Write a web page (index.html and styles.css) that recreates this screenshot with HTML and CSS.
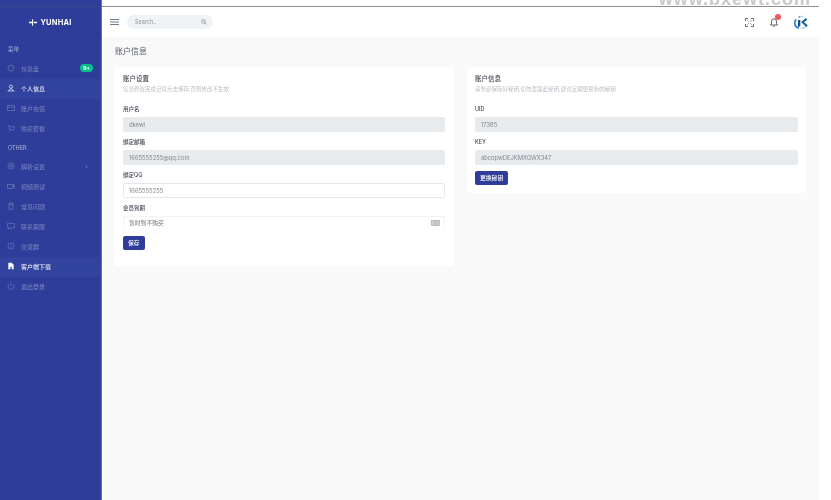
FILE: index.html
```html
<!DOCTYPE html>
<html lang="zh-CN">
<head>
<meta charset="utf-8">
<title>账户信息</title>
<link rel="stylesheet" href="styles.css">
</head>
<body>
<div class="app">
  <aside class="sidebar">
    <div class="top-rule"></div>
    <div class="brand">
      <svg class="brand-icon" viewBox="0 0 12 10"><path d="M0 4h4.6V0h1.6v10H4.6V6H0zM7.2 4H12v2H7.2z" fill="#fff"/></svg>
      <span>YUNHAI</span>
    </div>
    <div class="nav-label">菜单</div>
    <nav>
      <a class="nav-item"><svg viewBox="0 0 12 12"><circle cx="6" cy="6" r="4.6"/><path d="M6 6V3.5"/></svg><span>仪表盘</span><b class="badge">9+</b></a>
      <a class="nav-item active"><svg viewBox="0 0 12 12"><circle cx="6" cy="4" r="2.4"/><path d="M1 10.5h10M3 10.5c0-2 1-3 3-3s3 1 3 3"/></svg><span>个人信息</span></a>
      <a class="nav-item"><svg viewBox="0 0 12 12"><rect x="1" y="2.5" width="10" height="7.5"/><path d="M1 5h10"/></svg><span>账户充值</span></a>
      <a class="nav-item"><svg viewBox="0 0 12 12"><path d="M1 2h2l1 7h6l1-5H4"/></svg><span>购买套餐</span></a>
    </nav>
    <div class="nav-label">OTHER</div>
    <nav>
      <a class="nav-item"><svg viewBox="0 0 12 12"><circle cx="6" cy="6" r="4.6"/><circle cx="6" cy="6" r="1.8"/></svg><span>解析设置</span><i class="chev">›</i></a>
      <a class="nav-item"><svg viewBox="0 0 12 12"><rect x="1" y="3.5" width="8" height="6"/><path d="M9 6l2-1.5v4L9 7"/></svg><span>视频测试</span></a>
      <a class="nav-item"><svg viewBox="0 0 12 12"><path d="M3 1.500h6v9.500H3zM3 4h6"/></svg><span>常见问题</span></a>
      <a class="nav-item"><svg viewBox="0 0 12 12"><path d="M1 2h10v7H5l-2 2V9H1z"/></svg><span>联系客服</span></a>
      <a class="nav-item"><svg viewBox="0 0 12 12"><circle cx="6" cy="6" r="4.6"/><path d="M6 5.500V9M6 3v1"/></svg><span>交流群</span></a>
      <a class="nav-item active"><svg viewBox="0 0 12 12"><path class="solid" d="M2 1h5l3 3v7H7V7H5v4H2z"/></svg><span>客户端下载</span></a>
      <a class="nav-item"><svg viewBox="0 0 12 12"><path d="M3.500 3a4.400 4.400 0 1 0 5 0M6 1v5"/></svg><span>退出登录</span></a>
    </nav>
  </aside>

  <div class="main">
    <div class="strip"><span class="watermark">www.bxewt.com</span></div>
    <header class="topbar">
      <svg class="burger" viewBox="0 0 9 6"><path d="M0 .5h9M0 3h9M0 5.500h9"/></svg>
      <div class="search">
        <span>Search..</span>
        <svg viewBox="0 0 8 8"><circle cx="3.300" cy="3.300" r="2.300"/><path d="M5 5l2.300 2.300"/></svg>
      </div>
      <div class="top-actions">
        <svg class="tool" viewBox="0 0 9 9"><path d="M0.500 3V.5H3M6 .5h2.500V3M8.500 6v2.500H6M3 8.500H.5V6"/><path d="M2.500 2.500l1 1M6.500 2.500l-1 1M6.500 6.500l-1-1M2.500 6.500l1-1"/></svg>
        <div class="bell">
          <svg viewBox="0 0 8 9"><path d="M.5 7h7L6.500 5.500V3.300a2.500 2.500 0 0 0-5 0v2.200zM3.200 8.200h1.600"/></svg>
          <i class="dot"></i>
        </div>
        <svg class="avatar" viewBox="0 0 14 14">
          <path d="M5 13C1 12.500-.5 8 2 4.500" fill="none" stroke="#2f86c9" stroke-width="1.800"/>
          <path d="M7 13.200c2.500 0 4.500-.8 6-2.500" fill="none" stroke="#7fb6de" stroke-width="1"/>
          <circle cx="5.500" cy="1.800" r="1.100" fill="#58a9dc"/>
          <circle cx="8.300" cy="1.500" r=".9" fill="#9ccbe8"/>
          <path d="M4 5h2.300v6.500H4z" fill="#14508f"/>
          <path d="M7 7l5-4 1.300 1.700-3.300 2.500 3.800 3L12.300 12z" fill="#17609f"/>
        </svg>
      </div>
    </header>

    <main class="content">
      <h1 class="page-title">账户信息</h1>
      <div class="cards">
        <section class="card">
          <h2>账户设置</h2>
          <p class="sub">信息修改完成记得点击保存,否则修改不生效</p>
          <div class="field"><label>用户名</label><div class="input off">dkewl</div></div>
          <div class="field"><label>绑定邮箱</label><div class="input off">1665555255@qq.com</div></div>
          <div class="field"><label>绑定QQ</label><div class="input">1665555255</div></div>
          <div class="field"><label>会员到期</label>
            <div class="input soft"><span>暂时到不购买</span>
              <svg viewBox="0 0 9 6"><rect x=".5" y=".5" width="8" height="5"/><path d="M2 2h5M2 4h5"/></svg>
            </div>
          </div>
          <button class="btn">保存</button>
        </section>
        <section class="card card-right">
          <h2>账户信息</h2>
          <p class="sub">请务必保存好秘钥,切勿泄露此秘钥,建议定期更换新的秘钥</p>
          <div class="field"><label>UID</label><div class="input off">17385</div></div>
          <div class="field"><label>KEY</label><div class="input off">abcopwDEJKMXQWX347</div></div>
          <button class="btn">更换秘钥</button>
        </section>
      </div>
    </main>
  </div>
</div>
</body>
</html>
```

FILE: styles.css
```css
* { box-sizing: border-box; }
html, body { margin: 0; height: 100%; background: #fff; }
body {
  font-family: Inter, "Noto Sans CJK SC", sans-serif;
  color: #4a5160;
  overflow: hidden;
}
.app {
  width: 819px;
  height: 500px;
  display: flex;
  filter: blur(0.45px);
}

/* Sidebar */
.sidebar {
  width: 102px;
  flex: none;
  background: #2e3c9a;
  border-right: 1px solid #6472c6;
  position: relative;
}
.top-rule {
  position: absolute;
  left: 0; right: 0; top: 6px;
  height: 1px;
  background: #3b4680;
}
.brand {
  height: 41px;
  padding-top: 3px;
  display: flex;
  align-items: center;
  justify-content: center;
  gap: 3px;
  color: #fff;
  font-size: 7.500px;
  font-weight: 700;
  letter-spacing: .2px;
}
.brand-icon { width: 8px; height: 7px; }
.nav-label {
  height: 18px;
  padding-left: 8px;
  display: flex;
  align-items: center;
  font-size: 5.500px;
  color: rgba(255,255,255,.6);
}
.brand + .nav-label { padding-bottom: 2px; }
.nav-item {
  height: 20px;
  padding: 0 8px 1.500px 7px;
  display: flex;
  align-items: center;
  font-size: 6px;
  color: rgba(255,255,255,.36);
}
.nav-item svg {
  width: 8px;
  height: 8px;
  margin-right: 6px;
  fill: none;
  stroke: rgba(255,255,255,.32);
  stroke-width: 1;
}
.nav-item.active { background: #31429f; color: #fff; }
.nav-item.active svg { stroke: #fff; }
.nav-item .solid { fill: #fff; stroke: none; }
.badge {
  margin-left: auto;
  width: 13px;
  height: 8px;
  border-radius: 4px;
  background: #0bbf8c;
  color: #fff;
  font-size: 5px;
  line-height: 8px;
  text-align: center;
}
.chev { margin-left: auto; margin-right: 5px; font-style: normal; font-size: 7px; }

/* Main column */
.main { flex: 1; display: flex; flex-direction: column; background: #f9f9f9; }
.strip {
  height: 7px;
  flex: none;
  background: #fff;
  border-bottom: 1px solid #8b8f99;
  position: relative;
  overflow: hidden;
}
.watermark {
  position: absolute;
  right: 8px;
  top: -10px;
  font: 700 18px/18px "Liberation Sans", sans-serif;
  letter-spacing: 1px;
  color: #c9c9c9;
}
.topbar {
  height: 30px;
  flex: none;
  background: #fff;
  display: flex;
  align-items: center;
  padding: 0 11px 0 8px;
}
.burger { width: 9px; height: 6px; fill: none; stroke: #5d6b80; stroke-width: .9; }
.search {
  margin-left: 8px;
  width: 86px;
  height: 14px;
  border-radius: 7px;
  background: #f0f3f6;
  display: flex;
  align-items: center;
  justify-content: space-between;
  padding: 0 6px 0 8px;
  font-size: 5.500px;
  color: #8a919c;
}
.search svg { width: 6px; height: 6px; fill: none; stroke: #6f7680; stroke-width: .9; }
.top-actions { margin-left: auto; display: flex; align-items: center; }
.tool { width: 9px; height: 9px; fill: none; stroke: #555c66; stroke-width: .9; }
.bell { width: 8px; height: 9px; margin-left: 16px; position: relative; }
.bell svg { display: block; width: 8px; height: 9px; fill: none; stroke: #444b55; stroke-width: .9; }
.dot {
  position: absolute;
  right: -3px;
  top: -3.500px;
  width: 6px;
  height: 6px;
  border-radius: 50%;
  background: #f5555f;
}
.avatar { width: 14px; height: 14px; margin-left: 16px; }

/* Content */
.content { flex: 1; padding: 9px 12px 0 12px; }
.page-title {
  margin: 0 0 11px 1px;
  font-size: 8px;
  line-height: 10px;
  font-weight: 400;
  color: #555b66;
}
.cards { display: flex; gap: 13px; align-items: flex-start; }
.card {
  width: 340px;
  background: #fff;
  border-radius: 2px;
  padding: 7px 9px 16px;
}
.card-right { width: 339px; padding: 7px 8px 8px; }
.card h2 {
  margin: 0;
  font-size: 6.500px;
  line-height: 10px;
  font-weight: 500;
  color: #3f4653;
}
.sub {
  margin: 0 0 9.600px;
  font-size: 5.500px;
  line-height: 10px;
  color: #b9bdc5;
}
.field { margin-bottom: 5px; }
.field label {
  display: block;
  height: 10px;
  margin-bottom: 3px;
  font-size: 5.500px;
  line-height: 10px;
  font-weight: 500;
  color: #3f4653;
}
.input {
  height: 15px;
  padding: 0 5px;
  display: flex;
  align-items: center;
  justify-content: space-between;
  font-size: 5.800px;
  color: #80868f;
  background: #fff;
  border: 1px solid #e3e6ec;
  border-radius: 2px;
}
.input.off { background: #e8ebee; border-color: #e8ebee; }
.input.soft {
  padding: 0 4px 2px 5px;
  border-color: #f3f3f6;
  border-bottom: 0;
  color: #6d7076;
}
.input svg { width: 9px; height: 6px; fill: #d5d7da; stroke: #a6a9ae; stroke-width: .7; }
.btn {
  display: block;
  margin-top: 5.400px;
  height: 14px;
  padding: 0 5px;
  border: 0;
  border-radius: 2px;
  background: #2e3c9a;
  color: #fff;
  font: 500 5.800px/14px Inter, "Noto Sans CJK SC", sans-serif;
}
.card-right .btn { margin-top: 6.400px; }
```
